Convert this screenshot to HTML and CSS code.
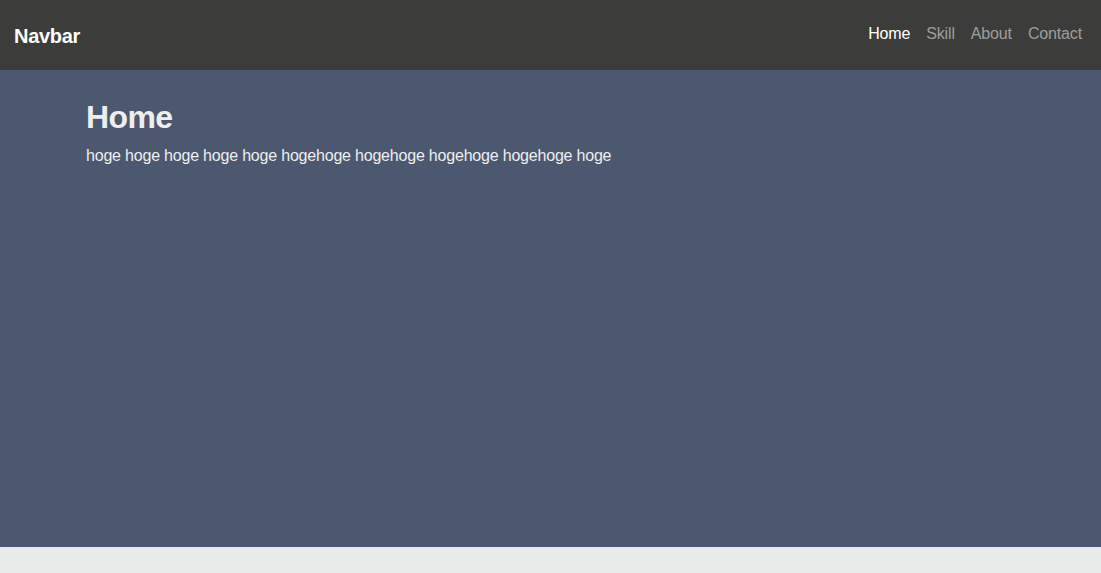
FILE: index.html
```html
<!DOCTYPE html>
<html lang="ja">
<head>
<meta charset="utf-8">
<title>Navbar</title>
<link rel="stylesheet" href="styles.css">
</head>
<body>
<nav class="navbar">
  <a class="brand" href="#">Navbar</a>
  <ul class="nav-links">
    <li><a class="nav-link active" href="#">Home</a></li>
    <li><a class="nav-link" href="#">Skill</a></li>
    <li><a class="nav-link" href="#">About</a></li>
    <li><a class="nav-link" href="#">Contact</a></li>
  </ul>
</nav>
<section class="hero">
  <div class="container">
    <h1 class="title">Home</h1>
    <p class="lead">hoge hoge hoge hoge hoge hogehoge hogehoge hogehoge hogehoge hoge</p>
  </div>
</section>
</body>
</html>
```
FILE: styles.css
```css
html, body {
  margin: 0;
  padding: 0;
}
body {
  background: #e9ebea;
  font-family: "Liberation Sans", Arial, sans-serif;
  color: #eeeeee;
}
.navbar {
  height: 70px;
  box-sizing: border-box;
  background: #3c3c3a;
  display: flex;
  align-items: center;
  justify-content: space-between;
  padding: 0 11px 0 14px;
}
.brand {
  color: #ffffff;
  font-size: 20px;
  font-weight: bold;
  letter-spacing: -0.3px;
  text-decoration: none;
  padding-top: 3px;
}
.nav-links {
  list-style: none;
  margin: 0;
  padding: 0 0 2px 0;
  display: flex;
}
.nav-link {
  display: block;
  padding: 0 8px;
  font-size: 16px;
  letter-spacing: -0.15px;
  color: rgba(255, 255, 255, 0.5);
  text-decoration: none;
}
.nav-link.active {
  color: #ffffff;
}
.hero {
  background: #4b5870;
  height: 477px;
}
.container {
  width: 930px;
  margin: 0 auto;
  padding: 0 15px 0 16px;
}
.title {
  margin: 0;
  padding-top: 28px;
  font-size: 32px;
  font-weight: bold;
  letter-spacing: -0.6px;
  line-height: 38px;
  color: #eeeeee;
}
.lead {
  margin: 8px 0 0;
  font-size: 16px;
  letter-spacing: -0.2px;
  line-height: 24px;
  color: #eeeeee;
}
```
